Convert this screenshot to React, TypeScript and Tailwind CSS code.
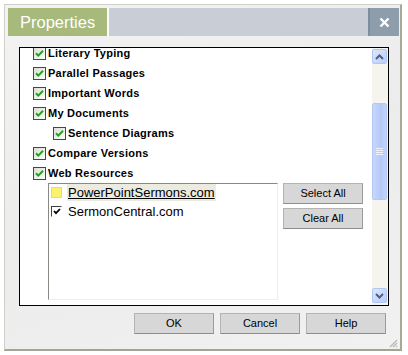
import type { ReactNode } from 'react'

function GreenCheck() {
  return (
    <svg width="13" height="13" viewBox="0 0 13 13" className="shrink-0">
      <defs>
        <linearGradient id="cbg" x1="0" y1="0" x2="1" y2="1">
          <stop offset="0" stopColor="#dcdcd4" />
          <stop offset="1" stopColor="#ffffff" />
        </linearGradient>
      </defs>
      <rect x="0.5" y="0.5" width="12" height="12" fill="url(#cbg)" stroke="#1c5180" />
      <path d="M3 6.2 L5.3 8.6 L10 3.8" fill="none" stroke="#21a121" strokeWidth="2" />
    </svg>
  )
}

function CheckRow({ label, indent = false }: { label: string; indent?: boolean }) {
  return (
    <div className={`flex h-[20px] items-center gap-[2px] ${indent ? 'pl-[33px]' : 'pl-[13px]'}`}>
      <GreenCheck />
      <span className="text-[11px] leading-[13px] font-bold tracking-[0.25px] text-black">{label}</span>
    </div>
  )
}

function GrayButton({ children, className = '' }: { children: ReactNode; className?: string }) {
  return (
    <button
      type="button"
      className={`flex items-center justify-center border border-[#b4b4b4] border-b-[#8c8c8c] border-r-[#9a9a9a] bg-[#d7d7d7] text-[11px] text-black ${className}`}
    >
      {children}
    </button>
  )
}

function ScrollArrow({ up }: { up: boolean }) {
  return (
    <div className="flex h-[15px] w-[15px] items-center justify-center rounded-[2px] border border-[#b0c6f4] bg-[linear-gradient(135deg,#dce7fd,#b9cdf7)]">
      <svg width="9" height="6" viewBox="0 0 9 6">
        <path
          d={up ? 'M1 5 L4.5 1.5 L8 5' : 'M1 1 L4.5 4.5 L8 1'}
          fill="none"
          stroke="#4d6185"
          strokeWidth="2"
        />
      </svg>
    </div>
  )
}

function Scrollbar() {
  return (
    <div className="flex w-[16px] flex-col bg-[#f6f4ee] pt-[1px] pb-[2px]">
      <ScrollArrow up />
      <div className="h-[39px]" />
      <div className="flex h-[97px] w-[15px] items-center justify-center rounded-[2px] border border-[#b2c8f6] bg-[linear-gradient(90deg,#c8d8fb,#b4c9f7_60%,#c3d4fa)]">
        <div className="flex flex-col gap-[1px]">
          {[0, 1, 2, 3].map((i) => (
            <div key={i} className="h-[1px] w-[7px] bg-[#eef3fe]" />
          ))}
        </div>
      </div>
      <div className="flex-1" />
      <ScrollArrow up={false} />
    </div>
  )
}

export default function App() {
  return (
    <div
      className="h-[355px] w-[408px] overflow-hidden bg-white pt-[4px] pl-[4px]"
      style={{ fontFamily: '"Liberation Sans", Arial, sans-serif' }}
    >
      <div className="flex h-[347px] w-[398px] flex-col border border-[#cfcfc8] border-r-2 border-b-2 border-r-[#a9a998] border-b-[#a4a494] bg-[linear-gradient(160deg,#f3f3f3,#ececec_50%,#f1f1f1)] pt-[3px] pr-[1px] pl-[3px]">
        {/* title bar */}
        <div className="flex h-[28px]">
          <div className="flex w-[99px] items-center bg-[#a8b97c] pl-[12px] text-[16.5px] text-white">
            Properties
          </div>
          <div className="w-[2px] bg-white" />
          <div className="flex-1 bg-[#c9ced6]" />
          <div className="w-[2px] bg-[#7b8fa3]" />
          <div className="flex w-[29px] items-center justify-center bg-[#8e9dac]">
            <svg width="11" height="11" viewBox="0 0 11 11">
              <path d="M1.5 1.5 L9.5 9.5 M9.5 1.5 L1.5 9.5" stroke="#ffffff" strokeWidth="2.4" />
            </svg>
          </div>
        </div>

        {/* list */}
        <div className="mt-[11px] ml-[11px] flex h-[259px] w-[370px] border border-black bg-white">
          <div className="flex flex-1 flex-col overflow-hidden">
            <div className="-mt-[5px]">
              <CheckRow label="Literary Typing" />
              <CheckRow label="Parallel Passages" />
              <CheckRow label="Important Words" />
              <CheckRow label="My Documents" />
              <CheckRow label="Sentence Diagrams" indent />
              <CheckRow label="Compare Versions" />
              <CheckRow label="Web Resources" />
            </div>
            <div className="ml-[28px] flex gap-[5px]">
              <div className="flex h-[117px] w-[230px] flex-col border border-[#8a8a84] border-r-[#efefe6] border-b-[#efefe6] bg-white pl-[2px]">
                <div className="flex h-[17px] items-center gap-[5px]">
                  <div className="h-[11px] w-[11px] border border-[#e4df70] bg-[#f9f26c]" />
                  <span className="bg-[#ecebe0] px-[1px] text-[13px] leading-[17px] text-black underline">
                    PowerPointSermons.com
                  </span>
                </div>
                <div className="mt-[2px] flex h-[17px] items-center gap-[5px]">
                  <div className="flex h-[11px] w-[11px] items-center justify-center border border-[#404040] border-r-white border-b-white bg-white">
                    <svg width="8" height="7" viewBox="0 0 8 7">
                      <path d="M1 3 L3 5.2 L7 1" fill="none" stroke="#000" strokeWidth="1.8" />
                    </svg>
                  </div>
                  <span className="px-[1px] text-[13px] text-black">SermonCentral.com</span>
                </div>
              </div>
              <div className="flex flex-col gap-[4px]">
                <GrayButton className="h-[21px] w-[80px]">Select All</GrayButton>
                <GrayButton className="h-[21px] w-[80px]">Clear All</GrayButton>
              </div>
            </div>
          </div>
          <Scrollbar />
        </div>

        {/* footer buttons */}
        <div className="mt-[7px] mr-[13px] flex justify-end gap-[6px]">
          <GrayButton className="h-[21px] w-[80px]">OK</GrayButton>
          <GrayButton className="h-[21px] w-[80px]">Cancel</GrayButton>
          <GrayButton className="h-[21px] w-[80px]">Help</GrayButton>
        </div>
        <div className="flex flex-1 items-end justify-end pr-[1px] pb-[1px]">
          <svg width="10" height="10" viewBox="0 0 10 10">
            <path d="M9 2 L2 9 M9 5 L5 9 M9 8 L8 9" stroke="#b8b8b0" strokeWidth="1.2" />
          </svg>
        </div>
      </div>
    </div>
  )
}
